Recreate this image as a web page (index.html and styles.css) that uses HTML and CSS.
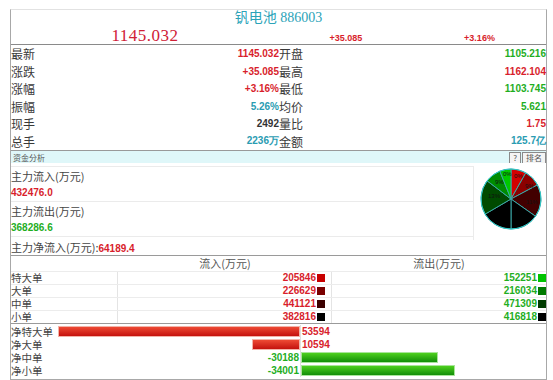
FILE: index.html
```html
<!DOCTYPE html>
<html lang="zh">
<head>
    <meta charset="UTF-8">
    <title>钒电池 886003</title>
    <link rel="stylesheet" href="styles.css">
</head>
<body>
    <div class="panel">
        <!-- header: name + price -->
        <div class="head">
            <div class="title">钒电池 886003</div>
            <div class="price-line">
                <span class="price">1145.032</span>
                <span class="chg">+35.085</span>
                <span class="chg">+3.16%</span>
            </div>
        </div>

        <!-- quote table -->
        <div class="quote">
            <div class="q"><span class="k">最新</span><span class="v red">1145.032</span></div>
            <div class="q"><span class="k">开盘</span><span class="v green">1105.216</span></div>
            <div class="q"><span class="k">涨跌</span><span class="v red">+35.085</span></div>
            <div class="q"><span class="k">最高</span><span class="v red">1162.104</span></div>
            <div class="q"><span class="k">涨幅</span><span class="v red">+3.16%</span></div>
            <div class="q"><span class="k">最低</span><span class="v green">1103.745</span></div>
            <div class="q"><span class="k">振幅</span><span class="v teal">5.26%</span></div>
            <div class="q"><span class="k">均价</span><span class="v green">5.621</span></div>
            <div class="q"><span class="k">现手</span><span class="v">2492</span></div>
            <div class="q"><span class="k">量比</span><span class="v red">1.75</span></div>
            <div class="q"><span class="k">总手</span><span class="v teal">2236万</span></div>
            <div class="q"><span class="k">金额</span><span class="v teal">125.7亿</span></div>
        </div>

        <!-- fund analysis -->
        <div class="fund-title">
            <span>资金分析</span>
            <div class="btns"><span class="btn">?</span><span class="btn">排名</span></div>
        </div>
        <div class="fund">
            <div class="fund-list">
                <div class="fund-item">
                    <div class="fk">主力流入(万元)</div>
                    <div class="fv red">432476.0</div>
                </div>
                <div class="fund-item">
                    <div class="fk">主力流出(万元)</div>
                    <div class="fv green">368286.6</div>
                </div>
            </div>
            <div class="pie">
                <svg width="72" height="74" viewBox="0 0 72 74">
                    <g stroke="#3aa6a6" stroke-width="1">
                        <path d="M37,36 L37,6 A30,30 0 0 1 51.77,9.89 Z" fill="#d40000"/>
                        <path d="M37,36 L51.77,9.89 A30,30 0 0 1 63.48,21.9 Z" fill="#8c0000"/>
                        <path d="M37,36 L63.48,21.9 A30,30 0 0 1 61.53,53.27 Z" fill="#420000"/>
                        <path d="M37,36 L61.53,53.27 A30,30 0 0 1 37,66 Z" fill="#000"/>
                        <path d="M37,36 L37,66 A30,30 0 0 1 11.09,51.13 Z" fill="#000"/>
                        <path d="M37,36 L11.09,51.13 A30,30 0 0 1 13.12,17.84 Z" fill="#004a00"/>
                        <path d="M37,36 L13.12,17.84 A30,30 0 0 1 25.85,8.15 Z" fill="#008c00"/>
                        <path d="M37,36 L25.85,8.15 A30,30 0 0 1 37,6 Z" fill="#00c800"/>
                    </g>
                    <circle cx="37" cy="36" r="30" fill="none" stroke="#30c8c8" stroke-width="1"/>
                    <g class="pie-label">
                        <text x="40" y="15">0%</text>
                        <text x="51" y="25">9%</text>
                        <text x="52" y="41">11%</text>
                        <text x="14" y="35">13%</text>
                        <text x="21" y="21">9%</text>
                        <text x="29" y="13">0%</text>
                    </g>
                </svg>
            </div>
        </div>
        <div class="net">主力净流入(万元):<span class="nv red">64189.4</span></div>

        <!-- order size table -->
        <div class="orders">
            <div class="o-row o-head"><span class="ok"></span><span>流入(万元)</span><span>流出(万元)</span></div>
            <div class="o-row">
                <span class="ok">特大单</span>
                <span class="ov red">205846<i class="sq r1"></i></span>
                <span class="ov green">152251<i class="sq g1"></i></span>
            </div>
            <div class="o-row">
                <span class="ok">大单</span>
                <span class="ov red">226629<i class="sq r2"></i></span>
                <span class="ov green">216034<i class="sq g2"></i></span>
            </div>
            <div class="o-row">
                <span class="ok">中单</span>
                <span class="ov red">441121<i class="sq r3"></i></span>
                <span class="ov green">471309<i class="sq g3"></i></span>
            </div>
            <div class="o-row">
                <span class="ok">小单</span>
                <span class="ov red">382816<i class="sq r4"></i></span>
                <span class="ov green">416818<i class="sq g4"></i></span>
            </div>
        </div>

        <!-- net bars -->
        <div class="bars">
            <div class="b-row">
                <span class="bk">净特大单</span>
                <div class="left-side"><i class="bar up" style="width:242px"></i></div>
                <div class="right-side"><span class="bv red">53594</span></div>
            </div>
            <div class="b-row">
                <span class="bk">净大单</span>
                <div class="left-side"><i class="bar up" style="width:48px"></i></div>
                <div class="right-side"><span class="bv red">10594</span></div>
            </div>
            <div class="b-row">
                <span class="bk">净中单</span>
                <div class="left-side"><span class="bv green">-30188</span></div>
                <div class="right-side"><i class="bar down" style="width:137px"></i></div>
            </div>
            <div class="b-row">
                <span class="bk">净小单</span>
                <div class="left-side"><span class="bv green">-34001</span></div>
                <div class="right-side"><i class="bar down" style="width:154px"></i></div>
            </div>
        </div>
    </div>
</body>
</html>
```
FILE: styles.css
```css
body {
    margin: 0;
    background-color: #fff;
    font-family: "Noto Sans CJK SC", sans-serif;
    color: #333;
}

.red { color: #d81e2c; }
.green { color: #1fae1f; }
.teal { color: #2a9cb2; }

.panel {
    box-sizing: border-box;
    width: 537px;
    margin: 9px 0 0 10px;
    border: 1px solid #a8a8a8;
    border-top-color: #e2e2e2;
}

/* header */
.head {
    height: 34px;
    border-bottom: 1px solid #8a8a8a;
}

.title {
    height: 16px;
    line-height: 16px;
    text-align: center;
    font-family: "Liberation Serif", "Noto Sans CJK SC", serif;
    font-size: 14px;
    color: #2ba3b8;
}

.price-line {
    display: grid;
    grid-template-columns: 268px 134px 1fr;
    height: 18px;
    align-items: center;
    text-align: center;
}

.price {
    font-family: "Liberation Serif", serif;
    font-size: 17px;
    color: #d02036;
    letter-spacing: 0.5px;
}

.chg {
    font-family: "Liberation Sans", sans-serif;
    font-size: 9px;
    font-weight: bold;
    color: #d81e2c;
    padding-top: 3px;
}

/* quote grid */
.quote {
    display: grid;
    grid-template-columns: 268px 1fr;
    grid-auto-rows: 17.5px;
}

.q {
    display: flex;
    justify-content: space-between;
    align-items: center;
}

.k {
    font-size: 12px;
    color: #3a3a3a;
}

.v {
    font-family: "Liberation Sans", sans-serif;
    font-size: 10px;
    font-weight: bold;
}

/* fund analysis */
.fund-title {
    display: flex;
    justify-content: space-between;
    align-items: center;
    height: 12px;
    border-top: 1px solid #999;
    background-color: #dff7f9;
    font-size: 8px;
    color: #555;
    padding-left: 2px;
}

.btns {
    display: flex;
    align-self: flex-end;
}

.btn {
    height: 10px;
    line-height: 10px;
    padding: 0 3px;
    margin-left: 1px;
    border: 1px solid #8a8a8a;
    border-bottom: none;
    font-size: 8px;
    background-color: #f4f4f4;
}

.fund {
    display: flex;
    height: 74px;
    padding-top: 3px;
}

.fund-list {
    width: 463px;
    border-top: 1px solid #ebebeb;
    border-right: 1px solid #ebebeb;
}

.fund-item {
    border-bottom: 1px solid #ebebeb;
}

.fk {
    height: 18px;
    line-height: 18px;
    font-size: 11px;
    color: #444;
}

.fv {
    height: 16px;
    line-height: 16px;
    font-family: "Liberation Sans", sans-serif;
    font-size: 10px;
    font-weight: bold;
}

.pie {
    flex: 1;
    margin-top: -3px;
}

.pie-label text {
    font-family: "Liberation Sans", sans-serif;
    font-size: 6px;
    fill: #111;
}

.net {
    height: 15px;
    line-height: 15px;
    font-size: 11px;
    color: #444;
    border-bottom: 1px solid #9a9a9a;
}

.nv {
    font-family: "Liberation Sans", sans-serif;
    font-size: 10px;
    font-weight: bold;
}

/* order table */
.orders {
    border-bottom: 1px solid #9a9a9a;
}

.o-row {
    display: grid;
    grid-template-columns: 107px 214px 1fr;
    height: 12px;
    border-bottom: 1px solid #ececec;
    font-size: 10.5px;
    line-height: 12px;
    color: #444;
}

.o-row:last-child {
    border-bottom: none;
}

.o-head {
    height: 15px;
    line-height: 15px;
    font-size: 11px;
    text-align: center;
    color: #555;
}

.ok {
    border-right: 1px solid #e4e4e4;
}

.o-head .ok {
    border-right: none;
}

.ov {
    display: flex;
    justify-content: flex-end;
    align-items: center;
    padding-right: 6px;
    border-right: 1px solid #e4e4e4;
    font-family: "Liberation Sans", sans-serif;
    font-size: 10px;
    font-weight: bold;
}

.ov:last-child {
    border-right: none;
    padding-right: 0;
}

.sq {
    display: inline-block;
    width: 8px;
    height: 8px;
    margin-left: 1px;
}

.r1 { background-color: #c80000; }
.r2 { background-color: #7a0000; }
.r3 { background-color: #3c0000; }
.r4 { background-color: #000; }
.g1 { background-color: #00c400; }
.g2 { background-color: #007a00; }
.g3 { background-color: #003c00; }
.g4 { background-color: #000; }

/* net bars */
.bars {
    padding: 1px 0 2px;
}

.b-row {
    display: flex;
    height: 13px;
    align-items: center;
}

.bk {
    width: 47px;
    font-size: 10.5px;
    color: #444;
    line-height: 13px;
}

.left-side {
    width: 242px;
    height: 13px;
    display: flex;
    justify-content: flex-end;
    align-items: center;
    border-right: 1px solid #e0e0e0;
}

.right-side {
    flex: 1;
    display: flex;
    align-items: center;
    height: 13px;
}

.bar {
    display: block;
    box-sizing: border-box;
    height: 11px;
    border: 1px solid #f3b3a8;
}

.bar.up {
    background: linear-gradient(#ee4a34, #c4120e);
}

.bar.down {
    border-color: #a9e59a;
    background: linear-gradient(#4ed01e, #128e08);
}

.bv {
    font-family: "Liberation Sans", sans-serif;
    font-size: 10px;
    font-weight: bold;
    padding: 0 1px;
}
```
